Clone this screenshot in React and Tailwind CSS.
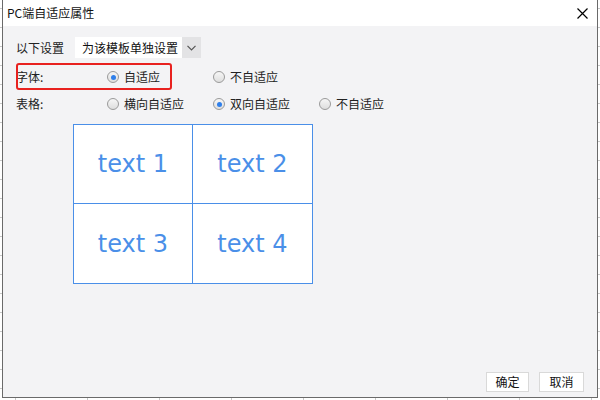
import React from 'react';

const font = { fontFamily: '"Noto Sans CJK SC", "Noto Sans", sans-serif' };

const Radio = ({ checked, label }) => (
  <div className="flex items-center gap-[5px] w-[106px]">
    <span className="w-[12px] h-[12px] rounded-full border border-[#9a9a9a] bg-gradient-to-b from-[#f6f6f6] to-[#dedede] flex items-center justify-center">
      {checked && <span className="w-[5px] h-[5px] rounded-full bg-[#2f7fea]"></span>}
    </span>
    <span className="text-[12px] text-[#222]">{label}</span>
  </div>
);

const Cell = ({ children, className }) => (
  <div className={`flex items-center justify-center text-[24px] text-[#4a8fe8] bg-white ${className}`} style={{ fontFamily: '"DejaVu Sans", Verdana, sans-serif' }}>
    {children}
  </div>
);

const App = () => {
  return (
    <div className="w-[600px] h-[400px] bg-white bg-[linear-gradient(#c8c8c8_1px,transparent_1px),linear-gradient(90deg,#c8c8c8_1px,transparent_1px)] bg-[size:72px_19px] bg-[position:15px_8px] px-[2px] pb-[2px]" style={font}>
      <div className="w-[596px] h-[398px] border border-t-0 border-[#6a6a6a] flex flex-col bg-[#f3f3f5]">
        {/* title bar */}
        <div className="h-[26px] bg-white flex items-center justify-between pl-[4px] pr-[9px]">
          <span className="text-[12px] text-[#111]">PC端自适应属性</span>
          <svg width="11" height="11" viewBox="0 0 11 11" className="text-black">
            <path d="M0.5 0.5L10.5 10.5M10.5 0.5L0.5 10.5" stroke="currentColor" strokeWidth="1.2" />
          </svg>
        </div>

        {/* body */}
        <div className="flex-1 flex flex-col pl-[13px]">
          <div className="mt-[11px] h-[21px] flex items-center">
            <span className="w-[59px] text-[12px] text-[#222]">以下设置</span>
            <div className="w-[126px] h-[21px] flex bg-[#e3e3e5]">
              <div className="w-[107px] bg-white flex items-center pl-[7px] text-[12px] text-[#111]">为该模板单独设置</div>
              <div className="flex-1 flex items-center justify-center">
                <svg width="9" height="6" viewBox="0 0 9 6">
                  <path d="M0.5 0.8L4.5 4.8L8.5 0.8" fill="none" stroke="#555" strokeWidth="1.2" />
                </svg>
              </div>
            </div>
          </div>

          <div className="relative mt-[9px] h-[20px] flex items-center">
            <span className="w-[91px] text-[12px] text-[#222]">字体:</span>
            <Radio checked label="自适应" />
            <Radio label="不自适应" />
            <div className="absolute left-[0px] top-[-4px] w-[156px] h-[27px] border-2 border-[#e8211f] rounded-[3px]"></div>
          </div>

          <div className="mt-[7px] h-[20px] flex items-center">
            <span className="w-[91px] text-[12px] text-[#222]">表格:</span>
            <Radio label="横向自适应" />
            <Radio checked label="双向自适应" />
            <Radio label="不自适应" />
          </div>

          <div className="mt-[10px] ml-[57px] w-[240px] h-[160px] border border-[#4a8fe8] grid grid-cols-2 grid-rows-2">
            <Cell className="border-r border-b border-[#4a8fe8]">text 1</Cell>
            <Cell className="border-b border-[#4a8fe8]">text 2</Cell>
            <Cell className="border-r border-[#4a8fe8]">text 3</Cell>
            <Cell>text 4</Cell>
          </div>

          <div className="mt-auto mb-[5px] mr-[13px] flex justify-end gap-[10px]">
            <button className="w-[43px] h-[20px] bg-white border border-[#d9d9d9] text-[12px] text-[#111] flex items-center justify-center">确定</button>
            <button className="w-[45px] h-[20px] bg-white border border-[#d9d9d9] text-[12px] text-[#111] flex items-center justify-center">取消</button>
          </div>
        </div>
      </div>
    </div>
  );
};

export default App;
